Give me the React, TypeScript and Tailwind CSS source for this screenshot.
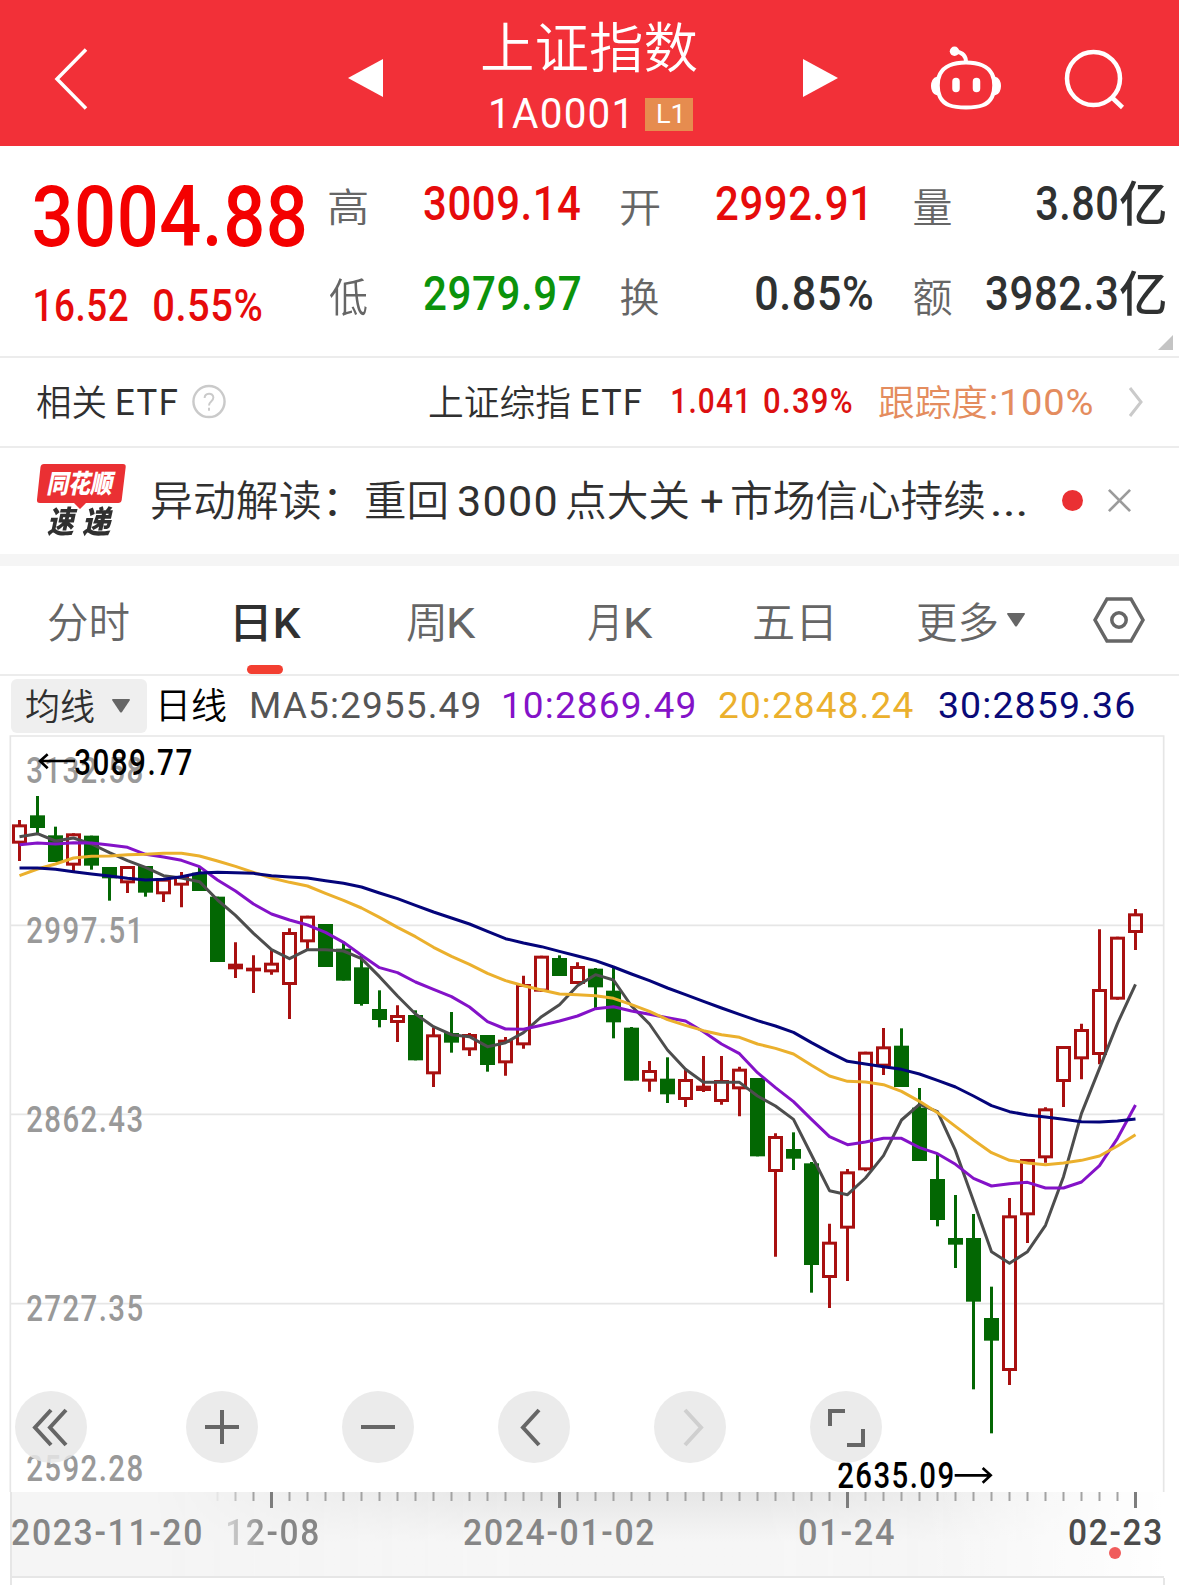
import React, { useLayoutEffect, useRef, useState } from 'react';
import clsx from 'clsx';

type Candle = [up: number, high: number, top: number, bottom: number, low: number];

// Chart space: 3 units per pixel, one candle every 54 units
const STEP = 54;
const FIRST_X = 58.5;

const candles: Candle[] = [
  [1, 300, 313, 371, 423], [0, 228, 286, 324, 340], [0, 320, 346, 426, 426], [1, 340, 340, 437, 455],
  [0, 347, 347, 437, 449], [0, 441, 441, 475, 542], [1, 438, 438, 490, 519], [0, 438, 438, 518, 530],
  [1, 476, 476, 523, 546], [1, 456, 468, 497, 562], [0, 440, 458, 513, 513], [0, 530, 530, 726, 726],
  [1, 667, 731, 748, 774], [1, 706, 743, 754, 819], [1, 690, 728, 757, 764], [1, 625, 636, 795, 897],
  [1, 587, 587, 667, 687], [0, 612, 612, 741, 741], [0, 665, 686, 782, 782], [0, 703, 742, 852, 857],
  [0, 811, 867, 900, 922], [1, 856, 885, 909, 966], [0, 871, 885, 1021, 1021], [1, 923, 943, 1063, 1101],
  [0, 876, 939, 968, 998], [1, 939, 942, 991, 1008], [0, 945, 945, 1035, 1055], [1, 951, 959, 1030, 1067],
  [1, 767, 792, 976, 986], [1, 707, 707, 815, 815], [0, 706, 714, 768, 768], [1, 727, 738, 792, 792],
  [0, 744, 746, 802, 869], [0, 742, 812, 907, 955], [0, 921, 923, 1082, 1082], [1, 1023, 1050, 1085, 1115],
  [0, 1012, 1076, 1123, 1149], [1, 1050, 1077, 1140, 1161], [1, 1008, 1097, 1113, 1116], [1, 1008, 1080, 1146, 1154],
  [1, 1040, 1046, 1108, 1189], [0, 1074, 1074, 1309, 1309], [1, 1240, 1248, 1356, 1610], [0, 1237, 1287, 1316, 1350],
  [0, 1326, 1330, 1635, 1718], [1, 1511, 1565, 1674, 1764], [1, 1347, 1354, 1526, 1683], [1, 995, 995, 1351, 1354],
  [1, 924, 979, 1040, 1065], [0, 925, 977, 1101, 1101], [0, 1104, 1163, 1323, 1323], [0, 1302, 1377, 1500, 1519],
  [0, 1425, 1554, 1574, 1644], [0, 1482, 1554, 1745, 2008], [0, 1700, 1794, 1862, 2140], [1, 1434, 1486, 1953, 1995],
  [1, 1317, 1317, 1486, 1569], [1, 1162, 1165, 1315, 1328], [1, 978, 978, 1086, 1161], [1, 911, 927, 1018, 1078],
  [1, 628, 807, 1005, 1033], [1, 650, 650, 839, 839], [1, 567, 580, 639, 690],
];

const averages = [
  {
    color: '#4d4d4d',
    values: [350, 341, 363, 354, 372, 398, 422, 442, 467, 474, 485, 540, 586, 640, 689, 716, 689, 689, 693, 716, 770, 828, 882, 920, 944, 950, 980, 968, 938, 890, 854, 797, 764, 780, 858, 912, 990, 1048, 1087, 1087, 1087, 1128, 1158, 1198, 1305, 1412, 1424, 1374, 1307, 1200, 1153, 1175, 1292, 1443, 1595, 1630, 1595, 1516, 1370, 1180, 1045, 910, 793],
  },
  {
    color: '#8412c8',
    values: [374, 369, 372, 368, 369, 375, 382, 403, 411, 421, 440, 480, 513, 552, 582, 600, 615, 637, 667, 706, 743, 758, 786, 808, 830, 861, 905, 927, 928, 916, 903, 888, 866, 860, 873, 883, 893, 903, 935, 972, 1001, 1058, 1103, 1145, 1198, 1250, 1274, 1266, 1255, 1255, 1283, 1301, 1333, 1375, 1398, 1391, 1387, 1404, 1404, 1386, 1337, 1255, 1155],
  },
  {
    color: '#ebb02d',
    values: [467, 447, 432, 414, 409, 408, 404, 403, 400, 400, 408, 423, 439, 457, 474, 487, 498, 520, 541, 564, 592, 622, 650, 682, 709, 733, 760, 782, 797, 810, 822, 824, 827, 835, 854, 874, 899, 916, 932, 944, 952, 972, 985, 1002, 1036, 1068, 1084, 1086, 1094, 1114, 1144, 1178, 1219, 1260, 1298, 1321, 1329, 1334, 1329, 1321, 1308, 1278, 1244],
  },
  {
    color: '#04047a',
    values: [444, 444, 448, 455, 462, 468, 475, 480, 478, 470, 459, 457, 458, 460, 467, 471, 474, 482, 490, 501, 519, 536, 556, 576, 594, 612, 634, 656, 669, 680, 694, 708, 722, 741, 762, 782, 804, 824, 844, 864, 883, 902, 918, 937, 968, 997, 1024, 1032, 1040, 1048, 1062, 1081, 1101, 1128, 1157, 1175, 1185, 1191, 1198, 1205, 1206, 1203, 1197],
  },
];

// Text squeezed or stretched so that its ink is exactly w wide
function Fit({ w, className, children }: { w: number; className?: string; children: string }) {
  const ref = useRef<HTMLSpanElement>(null);
  const [transform, setTransform] = useState('none');

  useLayoutEffect(() => {
    const s = getComputedStyle(ref.current!);
    const ctx = document.createElement('canvas').getContext('2d')!;
    ctx.font = `${s.fontStyle} ${s.fontWeight} ${s.fontSize} ${s.fontFamily}`;
    const m = ctx.measureText(children);
    const tracking = (parseFloat(s.letterSpacing) || 0) * (children.length - 1);
    const scale = w / (m.actualBoundingBoxLeft + m.actualBoundingBoxRight + tracking);
    setTransform(`translateX(${m.actualBoundingBoxLeft * scale}px) scaleX(${scale})`);
  }, [w, children]);

  return (
    <span className={clsx('block flex-none leading-none', className)} style={{ width: w }}>
      <span ref={ref} className="inline-block origin-left whitespace-nowrap" style={{ transform }}>
        {children}
      </span>
    </span>
  );
}

function Header() {
  return (
    <header className="flex h-[146px] items-center bg-[#f23038] text-white">
      <svg className="ml-[53px] mt-[11px] h-[64px] w-[37px] flex-none" viewBox="0 0 37 64" fill="none" stroke="currentColor" strokeWidth="3.5">
        <path d="M33 2.5 4 32 33 61.5" />
      </svg>
      <svg className="ml-[258px] mt-[10px] h-[38px] w-[36px] flex-none" viewBox="0 0 36 38" fill="currentColor">
        <path d="M0 19 35 0v38z" />
      </svg>
      <div className="ml-[98px] mt-[12px] flex w-[216px] flex-none flex-col">
        <Fit w={215} className="text-[54px] font-[350]">上证指数</Fit>
        <div className="mt-[16px] flex items-center">
          <Fit w={135} className="ml-[9px] text-[42px] tracking-[0.03em]">1A0001</Fit>
          <div className="ml-[19px] flex h-[33px] w-[48px] items-center justify-center bg-[#e68c4f]">
            <Fit w={23} className="text-[26px]">L1</Fit>
          </div>
        </div>
      </div>
      <svg className="ml-[105px] mt-[10px] h-[38px] w-[36px] flex-none" viewBox="0 0 36 38" fill="currentColor">
        <path d="M35 19 0 0v38z" />
      </svg>
      <svg className="ml-[91px] mt-[12px] h-[66px] w-[72px] flex-none" viewBox="930 46 72 66" fill="none" stroke="currentColor" strokeWidth="4">
        <path d="M966 62.500c14 0 22 4 26 11.500 3 6 3 17 0 23-4 8-12 10.500-26 10.500s-22-2.500-26-10.500c-3-6-3-17 0-23 4-7.500 12-11.500 26-11.500z" />
        <path d="M966 62c0-6-3-9.500-10-10.500" />
        <circle cx="954.500" cy="51.300" r="4.700" fill="currentColor" stroke="none" />
        <path d="M937 77.500c-7 1-7 16 0 17zM995 77.500c7 1 7 16 0 17z" fill="currentColor" strokeWidth="1.500" />
        <path d="M956 81.500v7M976.500 81.500v7" strokeWidth="7.500" strokeLinecap="round" />
      </svg>
      <svg className="ml-[62px] mt-[13px] h-[62px] w-[62px] flex-none" viewBox="1064 48 62 62" fill="none" stroke="currentColor" strokeWidth="4.500">
        <circle cx="1093.500" cy="77.500" r="26.500" />
        <path d="M1112 96.500 1122.500 106.500" />
      </svg>
    </header>
  );
}

function Quote() {
  return (
    <section className="flex h-[212px] border-b-2 border-[#ececec] font-medium tracking-[0.04em] text-[#2f3131]">
      <div className="w-[295px] flex-none pt-[29px] text-[#f40000]">
        <Fit w={271} className="ml-[34px] text-[85px]">3004.88</Fit>
        <div className="mt-[25px] flex text-[43.5px] text-[#e60b0b]">
          <Fit w={93} className="ml-[35px]">16.52</Fit>
          <Fit w={108} className="ml-[26px]">0.55%</Fit>
        </div>
      </div>
      <div className="flex flex-col gap-[42px] pt-[35px] text-[47.5px]">
        <div className="flex h-[48px] items-center">
          <Fit w={38} className="ml-[34px] mt-[7px] text-[40px] font-[350] text-[#666]">高</Fit>
          <Fit w={156} className="ml-[57px] text-[#e60b0b]">3009.14</Fit>
          <Fit w={38} className="ml-[40.5px] mt-[7px] text-[40px] font-[350] text-[#666]">开</Fit>
          <Fit w={149} className="ml-[57.5px] text-[#e60b0b]">2992.91</Fit>
          <Fit w={38} className="ml-[48.5px] mt-[7px] text-[40px] font-[350] text-[#666]">量</Fit>
          <Fit w={81} className="ml-[84.5px]">3.80</Fit>
          <Fit w={45} className="ml-[3px] mt-[2px]">亿</Fit>
        </div>
        <div className="flex h-[48px] items-center">
          <Fit w={38} className="ml-[34px] mt-[7px] text-[40px] font-[350] text-[#666]">低</Fit>
          <Fit w={156} className="ml-[57px] text-[#0b930b]">2979.97</Fit>
          <Fit w={38} className="ml-[40.5px] mt-[7px] text-[40px] font-[350] text-[#666]">换</Fit>
          <Fit w={116} className="ml-[97px]">0.85%</Fit>
          <Fit w={38} className="ml-[42px] mt-[7px] text-[40px] font-[350] text-[#666]">额</Fit>
          <Fit w={131} className="ml-[34.5px]">3982.3</Fit>
          <Fit w={45} className="ml-[3px] mt-[2px]">亿</Fit>
        </div>
      </div>
      <svg className="mb-[6px] ml-[-7px] h-[15px] w-[15px] flex-none self-end" viewBox="0 0 15 15" fill="#c4c4c4">
        <path d="M15 0v15H0z" />
      </svg>
    </section>
  );
}

function EtfRow() {
  return (
    <section className="flex h-[90px] items-center border-b-2 border-[#ececec] text-[36px] text-[#303030]">
      <Fit w={69} className="ml-[37px] mt-[4px] font-[350]">相关</Fit>
      <Fit w={60} className="ml-[11px] mt-[2px] tracking-[0.04em]">ETF</Fit>
      <svg className="ml-[14px] h-[36px] w-[36px] flex-none" viewBox="0 0 36 37" fill="none" stroke="#cacaca" strokeWidth="2.500">
        <circle cx="18" cy="18" r="16" />
        <path d="M13.500 14.500c0-6 9-6 9-.5 0 4-4.500 4-4.500 8M18 24.500v3" strokeWidth="2" />
      </svg>
      <Fit w={141} className="ml-[202px] mt-[4px] font-[350]">上证综指</Fit>
      <Fit w={59} className="ml-[12px] mt-[2px] tracking-[0.04em]">ETF</Fit>
      <Fit w={74} className="ml-[31px] mb-[2px] text-[35px] font-medium tracking-[0.04em] text-[#dc1010]">1.041</Fit>
      <Fit w={88} className="ml-[18px] mb-[2px] text-[35px] font-medium tracking-[0.04em] text-[#dc1010]">0.39%</Fit>
      <Fit w={108} className="ml-[27px] mt-[3px] font-[350] text-[#e48c5e]">跟踪度</Fit>
      <Fit w={101} className="ml-[4px] mt-[2px] tracking-[0.02em] text-[#e48c5e]">:100%</Fit>
      <svg className="ml-[36px] h-[32px] w-[16px] flex-none" viewBox="0 0 16 32" fill="none" stroke="#cacaca" strokeWidth="3">
        <path d="m2 2 11 14L2 30" />
      </svg>
    </section>
  );
}

function NewsRow() {
  return (
    <section className="flex h-[106px] items-center text-[42px] text-[#303030]">
      <div className="relative ml-[36px] h-[74px] w-[90px] flex-none">
        <svg className="absolute inset-0" viewBox="0 0 90 74" fill="#ea3033">
          <path d="M8 0h79q3 0 2.700 3l-4 33q-.5 3-3.500 3H50l-6 6-6-6H4q-3.500 0-3-3.500L4.500 3Q5 0 8 0z" />
        </svg>
        <Fit w={69} className="absolute left-[11px] top-[7px] text-[26px] font-black italic text-white">同花顺</Fit>
        <Fit w={31} className="absolute left-[11px] top-[43px] text-[31px] font-black italic">速</Fit>
        <Fit w={31} className="absolute left-[46px] top-[43px] text-[31px] font-black italic">递</Fit>
      </div>
      <Fit w={184} className="ml-[26px] mt-[2px] font-[350]">异动解读：</Fit>
      <Fit w={80} className="ml-[30px] mt-[2px] font-[350]">重回</Fit>
      <Fit w={98} className="ml-[12px] mt-[2px] tracking-[0.03em]">3000</Fit>
      <Fit w={123} className="ml-[10px] mt-[2px] font-[350]">点大关</Fit>
      <Fit w={22} className="ml-[12px] mt-[2px]">+</Fit>
      <Fit w={253} className="ml-[9px] mt-[2px] font-[350]">市场信心持续</Fit>
      <Fit w={33} className="ml-[7px] mt-[2px]">...</Fit>
      <span className="mb-[1px] ml-[37px] h-[21px] w-[21px] flex-none rounded-full bg-[#ea3033]" />
      <svg className="mb-[2px] ml-[24px] h-[25px] w-[25px] flex-none" viewBox="0 0 26 26" stroke="#9b9b9b" strokeWidth="2.800">
        <path d="m2 2 22 22M24 2 2 24" />
      </svg>
    </section>
  );
}

function Tabs() {
  return (
    <nav className="flex h-[110px] items-center border-b-2 border-[#ececec] text-[42px] text-[#666]">
      <Fit w={81} className="ml-[48px] mt-[7px] font-[350]">分时</Fit>
      <div className="relative ml-[107px] mt-[7px]">
        <Fit w={65} className="font-medium text-[#303030]">日K</Fit>
        <span className="absolute left-[11px] top-[62px] h-[9px] w-[36px] rounded-full bg-[#f33f31]" />
      </div>
      <div className="ml-[106px] mt-[7px] flex gap-[6px]">
        <Fit w={36} className="font-[350]">周</Fit>
        <Fit w={27}>K</Fit>
      </div>
      <div className="ml-[112px] mt-[7px] flex gap-[9px]">
        <Fit w={29} className="font-[350]">月</Fit>
        <Fit w={27}>K</Fit>
      </div>
      <Fit w={77} className="ml-[101px] mt-[7px] font-[350]">五日</Fit>
      <Fit w={79} className="ml-[87px] mt-[7px] font-[350]">更多</Fit>
      <svg className="ml-[10px] h-[14px] w-[18px] flex-none" viewBox="0 0 18 14" fill="currentColor">
        <path d="M0 1q0-1 1-1h16q1 0 1 1L10 13q-1 1-2 0z" />
      </svg>
      <svg className="ml-[68px] h-[46px] w-[52px] flex-none" viewBox="0 0 52 46" fill="none" stroke="currentColor" strokeWidth="3.500">
        <path d="M14 2h24l12 21-12 21H14L2 23z" />
        <circle cx="26" cy="23" r="7.200" />
      </svg>
    </nav>
  );
}

function AverageRow() {
  return (
    <section className="flex h-[59px] items-center text-[36px] tracking-[0.03em]">
      <div className="ml-[11px] flex h-[54px] w-[136px] flex-none items-center rounded-md bg-[#efefef] font-[350] text-[#303030]">
        <Fit w={68} className="ml-[15px] mt-[4px] tracking-normal">均线</Fit>
        <svg className="ml-[18px] h-[14px] w-[18px] flex-none" viewBox="0 0 18 14" fill="#666">
          <path d="M0 1q0-1 1-1h16q1 0 1 1L10 13q-1 1-2 0z" />
        </svg>
      </div>
      <Fit w={65} className="ml-[14px] mt-[3px] font-[350] tracking-normal text-black">日线</Fit>
      <Fit w={228} className="ml-[25px] mt-[1px] text-[#555]">MA5:2955.49</Fit>
      <Fit w={190} className="ml-[25px] mt-[1px] text-[#8412c8]">10:2869.49</Fit>
      <Fit w={194} className="ml-[25px] mt-[1px] text-[#ebb02d]">20:2848.24</Fit>
      <Fit w={195} className="ml-[26px] mt-[1px] text-[#0a0a78]">30:2859.36</Fit>
    </section>
  );
}

const buttonIcons = [
  { d: 'M36 19 20 36.5 36 54M51 19 35 36.5 51 54', color: '#666', gap: 'mr-[99px]' },
  { d: 'M36 19v34M19 36h34', color: '#666', gap: 'mr-[84px]' },
  { d: 'M19 36h34', color: '#666', gap: 'mr-[84px]' },
  { d: 'M41 19 25 36.5 41 54', color: '#666', gap: 'mr-[84px]' },
  { d: 'M31 19 47 36.5 31 54', color: '#cfcfcf', gap: 'mr-[84px]' },
  { d: 'M20 35V20h15M53 38v16H37', color: '#666', gap: '' },
];

function Chart() {
  return (
    <section className="relative h-[757px] text-[36px] font-medium tracking-[0.05em] text-[#999]">
      <svg className="absolute left-0 top-0 h-[757px] w-[1179px]" viewBox="0 45 3537 2271">
        <path d="M31 2316V48h3460v2268M31 616h3460M31 1183h3460M31 1751h3460" fill="none" stroke="#e6e6e6" strokeWidth="5" />
      </svg>
      <Fit w={115} className="absolute left-[27px] top-[18px]">3132.58</Fit>
      <Fit w={111} className="absolute left-[27px] top-[178px]">2997.51</Fit>
      <Fit w={115} className="absolute left-[27px] top-[367px]">2862.43</Fit>
      <Fit w={115} className="absolute left-[27px] top-[556px]">2727.35</Fit>
      <Fit w={115} className="absolute left-[27px] top-[716px]">2592.28</Fit>
      <svg className="absolute left-0 top-0 h-[757px] w-[1179px]" viewBox="0 45 3537 2271" fill="none">
        {candles.map(([up, high, top, bottom, low], i) => {
          const x = FIRST_X + i * STEP;
          return up ? (
            <g key={i} stroke="#a81010" strokeWidth="9">
              <path d={`M${x} ${high}V${top + 2}M${x} ${bottom - 2}V${low}`} />
              <rect x={x - 18} y={top + 4.5} width="36" height={Math.max(bottom - top - 9, 1)} />
            </g>
          ) : (
            <g key={i} fill="#036703">
              <rect x={x - 4.5} y={high} width="9" height={low - high} />
              <rect x={x - 22.5} y={top} width="45" height={bottom - top} />
            </g>
          );
        })}
        {averages.map(({ color, values }) => (
          <polyline key={color} stroke={color} strokeWidth="9" strokeLinejoin="round" points={values.map((v, i) => `${FIRST_X + i * STEP},${v}`).join(' ')} />
        ))}
        <path d="M225 123H118M143 103 120 123 143 145" stroke="#000" strokeWidth="8" />
        <path d="M2864 2266H2970M2948 2244 2972 2266 2948 2288" stroke="#000" strokeWidth="8" />
      </svg>
      <Fit w={116} className="absolute left-[75px] top-[10px] text-black">3089.77</Fit>
      <Fit w={115} className="absolute left-[838px] top-[723px] text-black">2635.09</Fit>
      <div className="absolute left-[15px] top-[656px] flex">
        {buttonIcons.map(({ d, color, gap }) => (
          <button key={d} className={clsx('h-[72px] w-[72px] flex-none rounded-full bg-[#e8e8e8]/85', gap)}>
            <svg viewBox="0 0 72 72" fill="none" stroke={color} strokeWidth="4">
              <path d={d} />
            </svg>
          </button>
        ))}
      </div>
    </section>
  );
}

function DateAxis() {
  return (
    <section className="relative ml-[10px] h-[86px] w-[1154px] border-b-2 border-l-2 border-[#e6e6e6] bg-[#f5f5f5]">
      <div className="absolute inset-0 bg-linear-to-b from-[#e6e6e6] to-[#f6f6f6] to-60% mask-[linear-gradient(to_right,transparent_12%,black_45%,black_65%,transparent)]" />
      <div className="absolute inset-y-0 right-0 w-[240px] bg-linear-to-r from-transparent to-white" />
      <svg className="absolute left-[-2px] top-0 h-[16px] w-[1154px]" viewBox="10 0 1154 16">
        {candles.map((_, i) => {
          if (i < 11) return null;
          const major = i % 16 === 14;
          return (
            <path key={i} d={`M${19.5 + i * 18} 0v${major ? 16 : 9}`} stroke={major ? '#7d7d7d' : '#a3a3a3'} strokeWidth={major ? 3 : 2} opacity={i === 11 ? 0.15 : i === 12 ? 0.6 : 1} />
          );
        })}
      </svg>
      <div className="relative flex pt-[23px] text-[36px] font-medium tracking-[0.05em] text-[#868686]">
        <Fit w={189}>2023-11-20</Fit>
        <div className="ml-[26px] mask-[linear-gradient(to_right,rgb(0_0_0/0.3),black_45%)]">
          <Fit w={91}>12-08</Fit>
        </div>
        <Fit w={190} className="ml-[146px]">2024-01-02</Fit>
        <Fit w={95} className="ml-[145px]">01-24</Fit>
        <Fit w={92} className="ml-[175px] text-[#4c4c4c]">02-23</Fit>
      </div>
      <span className="absolute left-[1097px] top-[55px] h-[12px] w-[12px] rounded-full bg-[#f05c5c]" />
    </section>
  );
}

export default function App() {
  return (
    <main className="h-[1585px] w-[1179px] overflow-hidden bg-white font-['Roboto','Noto_Sans_CJK_SC',sans-serif]">
      <Header />
      <Quote />
      <EtfRow />
      <NewsRow />
      <div className="h-[12px] bg-[#f5f5f5]" />
      <Tabs />
      <AverageRow />
      <Chart />
      <DateAxis />
      <div className="ml-[10px] h-[7px] w-[1155px] border-x-2 border-[#e6e6e6]" />
    </main>
  );
}
